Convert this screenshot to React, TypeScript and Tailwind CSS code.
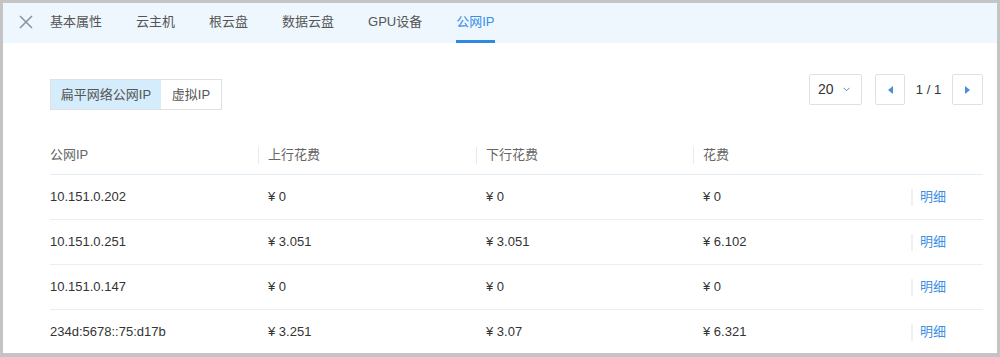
import React from 'react';

const tabs = ['基本属性', '云主机', '根云盘', '数据云盘', 'GPU设备', '公网IP'];

const rows = [
  { ip: '10.151.0.202', up: '¥ 0', down: '¥ 0', total: '¥ 0' },
  { ip: '10.151.0.251', up: '¥ 3.051', down: '¥ 3.051', total: '¥ 6.102' },
  { ip: '10.151.0.147', up: '¥ 0', down: '¥ 0', total: '¥ 0' },
  { ip: '234d:5678::75:d17b', up: '¥ 3.251', down: '¥ 3.07', total: '¥ 6.321' },
];

const font = { fontFamily: '"Liberation Sans", "Noto Sans CJK SC", sans-serif' };

const App = () => {
  return (
    <div className="w-[1000px] h-[357px] bg-[#c4c4c4] pt-[3px] px-[3px] pb-[4px]" style={font}>
      <div className="w-full h-full bg-white overflow-hidden flex flex-col text-[13px]">
        {/* tabs */}
        <div className="h-[40px] shrink-0 bg-[#eef7fe] flex items-stretch">
          <div className="w-[47px] pl-[16px] flex items-center pb-[3px]">
            <svg width="14" height="14" viewBox="0 0 14 14">
              <path d="M1 1 L13 13 M13 1 L1 13" stroke="#8b93a3" strokeWidth="1.6" />
            </svg>
          </div>
          <div className="flex gap-[34px]">
            {tabs.map((t, i) => (
              <div
                key={t}
                className={
                  'flex items-center pt-[1px] border-b-[3px] ' +
                  (i === tabs.length - 1
                    ? 'border-[#2d8ae0] text-[#3a8ee6]'
                    : 'border-transparent text-[#555]')
                }
              >
                {t}
              </div>
            ))}
          </div>
        </div>

        {/* content */}
        <div className="pl-[47px] pr-[14px]">
          <div className="mt-[31px] flex justify-between items-start">
            <div className="mt-[5px] flex h-[31px] border border-[#dde1e6] text-[#555]">
              <div className="w-[110px] bg-[#d4ecfc] flex items-center justify-center">扁平网络公网IP</div>
              <div className="w-[60px] flex items-center justify-center">虚拟IP</div>
            </div>
            <div className="flex items-center text-[#333]">
              <div className="w-[53px] h-[31px] border border-[#dde1e6] rounded-[2px] flex items-center pl-[8px] gap-[9px]">
                <span className="text-[14px]">20</span>
                <svg width="7" height="5" viewBox="0 0 7 5">
                  <path d="M0.5 0.8 L3.5 3.8 L6.5 0.8" stroke="#4a90d9" strokeWidth="1" fill="none" />
                </svg>
              </div>
              <div className="ml-[13px] w-[30px] h-[31px] border border-[#dde1e6] rounded-[2px] flex items-center justify-center">
                <svg width="5" height="8" viewBox="0 0 5 8">
                  <path d="M5 0 L0 4 L5 8 Z" fill="#4a8fd9" />
                </svg>
              </div>
              <div className="w-[47px] text-center text-[13px]">1 / 1</div>
              <div className="w-[31px] h-[31px] border border-[#dde1e6] rounded-[2px] flex items-center justify-center">
                <svg width="5" height="8" viewBox="0 0 5 8">
                  <path d="M0 0 L5 4 L0 8 Z" fill="#4a8fd9" />
                </svg>
              </div>
            </div>
          </div>

          {/* table */}
          <div className="mt-[26px]">
            <div className="grid grid-cols-[208px_218px_217px_218px_1fr] h-[39px] items-center border-b border-[#e3edf6] text-[#666]">
              <div>公网IP</div>
              {['上行花费', '下行花费', '花费'].map((h) => (
                <div key={h} className="flex items-center">
                  <span className="w-px h-[17px] bg-[#e6e9ee] mr-[9px]" />
                  <span>{h}</span>
                </div>
              ))}
              <div />
            </div>
            {rows.map((r) => (
              <div
                key={r.ip}
                className="grid grid-cols-[208px_218px_217px_218px_1fr] h-[45px] items-center border-b border-[#ebeef2] text-[#333]"
              >
                <div>{r.ip}</div>
                <div className="pl-[10px]">{r.up}</div>
                <div className="pl-[10px]">{r.down}</div>
                <div className="pl-[10px]">{r.total}</div>
                <div className="flex items-center">
                  <span className="w-[2px] h-[17px] bg-[#eef0f3] mr-[7px]" />
                  <span className="text-[#3c8fe3]">明细</span>
                </div>
              </div>
            ))}
          </div>
        </div>
      </div>
    </div>
  );
};

export default App;
